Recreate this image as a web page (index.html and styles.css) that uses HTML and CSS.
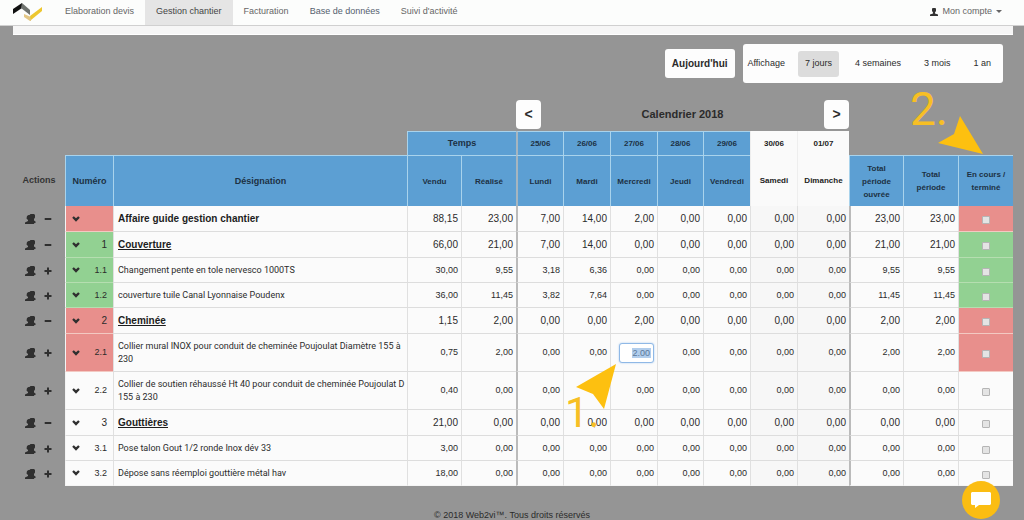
FILE: index.html
```html
<!DOCTYPE html>
<html lang="fr">
<head>
<meta charset="utf-8">
<title>Gestion chantier</title>
<link rel="stylesheet" href="styles.css">
</head>
<body>
<svg class="defs" aria-hidden="true">
  <symbol id="users" viewBox="0 0 11 10"><path d="M5.500 0H9l1 1v2.500L9 5v1.500l1.500 1V9L9 9.300V10H0V8.500L3 7V6L1.500 4.500 2 2l1.500-1h1z"/></symbol>
  <symbol id="minus" viewBox="0 0 8 8"><path d="M.7 3h6.600v2H.7z"/></symbol>
  <symbol id="plus" viewBox="0 0 8 8"><path d="M3 0.500h2V3h2.500v2H5v2.500H3V5H.5V3H3z"/></symbol>
  <symbol id="chev" viewBox="0 0 8 6"><path d="M.2 1.800 1.800.3 4 2.200 6.200.3 7.800 1.800 4 5.800z"/></symbol>
</svg>
<nav class="navbar">
  <a class="brand" href="#" aria-label="Accueil">
    <svg viewBox="0 0 30 18" width="30" height="18"><path d="M0 6 9 0v5L0 11z" fill="#111"/><path d="M9 0l8 7v5L8 5z" fill="#6f736f"/><path d="M11 11l7 3v4h-1l-6-4z" fill="#e3c684"/><path d="M17 13 29 4v4L18 17z" fill="#edc72f"/></svg>
  </a>
  <a class="tab" href="#">Elaboration devis</a>
  <a class="tab active" href="#">Gestion chantier</a>
  <a class="tab" href="#">Facturation</a>
  <a class="tab blue" href="#">Base de données</a>
  <a class="tab" href="#">Suivi d'activité</a>
  <a class="account" href="#"><svg viewBox="0 0 8 8" width="8" height="8"><path d="M2.500 0h3l.5 1v2l-1 1.500v1L8 6.500V8H0V6.500l3-1v-1L2 3V1z" fill="#333"/></svg>Mon compte<span class="caret"></span></a>
</nav>
<main class="content">
  <div class="panel-end"></div>
  <div class="toolbar">
    <button class="today">Aujourd'hui</button>
    <div class="views"><span class="views-label">Affichage</span><button class="view on">7 jours</button><button class="view">4 semaines</button><button class="view">3 mois</button><button class="view">1 an</button></div>
  </div>
  <table class="plan">
    <colgroup><col class="c-act"><col class="c-num"><col><col class="c-time"><col class="c-tot"><col class="c-day"><col class="c-day"><col class="c-day"><col class="c-dayn"><col class="c-day"><col class="c-day"><col class="c-sun"><col class="c-time"><col class="c-tot"><col class="c-tot"></colgroup>
    <thead>
      <tr class="cal"><td colspan="5"></td><td colspan="7"><div class="calbar"><button class="step" aria-label="Semaine précédente">&lt;</button><span>Calendrier 2018</span><button class="step" aria-label="Semaine suivante">&gt;</button></div></td><td colspan="3"></td></tr>
      <tr class="dates"><td colspan="3"></td><th class="h mid" colspan="2">Temps</th><th class="h mark">25/06</th><th class="h">26/06</th><th class="h">27/06</th><th class="h">28/06</th><th class="h">29/06</th><th class="w">30/06</th><th class="w">01/07</th><td colspan="3"></td></tr>
      <tr class="names"><th class="act mid">Actions</th><th class="h mid">Numéro</th><th class="h mid">Désignation</th><th class="h">Vendu</th><th class="h">Réalisé</th><th class="h mark">Lundi</th><th class="h">Mardi</th><th class="h">Mercredi</th><th class="h">Jeudi</th><th class="h">Vendredi</th><th class="w">Samedi</th><th class="w">Dimanche</th><th class="h">Total période ouvrée</th><th class="h">Total période</th><th class="h anchor">En cours / terminé
        <span class="step-label two">2.</span>
        <svg class="arrow arrow-two" viewBox="0 0 45 38" width="45" height="38"><path d="M22 0 45 38 0 27l16-9z" fill="#fdc010"/></svg></th></tr>
    </thead>
    <tbody>
      <tr class="main red"><td class="act"><div><button aria-label="Équipe"><svg class="i-users"><use href="#users"/></svg></button><button aria-label="Réduire"><svg class="i-sign"><use href="#minus"/></svg></button></div></td><td class="num"><div><svg class="i-chev"><use href="#chev"/></svg><span></span></div></td><td class="des">Affaire guide gestion chantier</td><td>88,15</td><td>23,00</td><td class="mark">7,00</td><td>14,00</td><td>2,00</td><td>0,00</td><td>0,00</td><td class="we">0,00</td><td class="we">0,00</td><td class="mark">23,00</td><td>23,00</td><td class="chk"><input type="checkbox" aria-label="Affaire terminée"></td></tr>
      <tr class="main green"><td class="act"><div><button aria-label="Équipe"><svg class="i-users"><use href="#users"/></svg></button><button aria-label="Réduire"><svg class="i-sign"><use href="#minus"/></svg></button></div></td><td class="num"><div><svg class="i-chev"><use href="#chev"/></svg><span>1</span></div></td><td class="des"><a href="#">Couverture</a></td><td>66,00</td><td>21,00</td><td class="mark">7,00</td><td>14,00</td><td>0,00</td><td>0,00</td><td>0,00</td><td class="we">0,00</td><td class="we">0,00</td><td class="mark">21,00</td><td>21,00</td><td class="chk"><input type="checkbox" aria-label="1 terminé"></td></tr>
      <tr class="green"><td class="act"><div><button aria-label="Équipe"><svg class="i-users"><use href="#users"/></svg></button><button aria-label="Ajouter"><svg class="i-sign"><use href="#plus"/></svg></button></div></td><td class="num"><div><svg class="i-chev"><use href="#chev"/></svg><span>1.1</span></div></td><td class="des">Changement pente en tole nervesco 1000TS</td><td>30,00</td><td>9,55</td><td class="mark">3,18</td><td>6,36</td><td>0,00</td><td>0,00</td><td>0,00</td><td class="we">0,00</td><td class="we">0,00</td><td class="mark">9,55</td><td>9,55</td><td class="chk"><input type="checkbox" aria-label="1.1 terminé"></td></tr>
      <tr class="green"><td class="act"><div><button aria-label="Équipe"><svg class="i-users"><use href="#users"/></svg></button><button aria-label="Ajouter"><svg class="i-sign"><use href="#plus"/></svg></button></div></td><td class="num"><div><svg class="i-chev"><use href="#chev"/></svg><span>1.2</span></div></td><td class="des">couverture tuile Canal Lyonnaise Poudenx</td><td>36,00</td><td>11,45</td><td class="mark">3,82</td><td>7,64</td><td>0,00</td><td>0,00</td><td>0,00</td><td class="we">0,00</td><td class="we">0,00</td><td class="mark">11,45</td><td>11,45</td><td class="chk"><input type="checkbox" aria-label="1.2 terminé"></td></tr>
      <tr class="main red"><td class="act"><div><button aria-label="Équipe"><svg class="i-users"><use href="#users"/></svg></button><button aria-label="Réduire"><svg class="i-sign"><use href="#minus"/></svg></button></div></td><td class="num"><div><svg class="i-chev"><use href="#chev"/></svg><span>2</span></div></td><td class="des"><a href="#">Cheminée</a></td><td>1,15</td><td>2,00</td><td class="mark">0,00</td><td>0,00</td><td>2,00</td><td>0,00</td><td>0,00</td><td class="we">0,00</td><td class="we">0,00</td><td class="mark">2,00</td><td>2,00</td><td class="chk"><input type="checkbox" aria-label="2 terminé"></td></tr>
      <tr class="tall red"><td class="act"><div><button aria-label="Équipe"><svg class="i-users"><use href="#users"/></svg></button><button aria-label="Ajouter"><svg class="i-sign"><use href="#plus"/></svg></button></div></td><td class="num"><div><svg class="i-chev"><use href="#chev"/></svg><span>2.1</span></div></td><td class="des">Collier mural INOX pour conduit de cheminée Poujoulat Diamètre 155 à 230</td><td>0,75</td><td>2,00</td><td class="mark">0,00</td><td>0,00</td><td class="edit anchor"><input type="text" class="hours" value="2.00" aria-label="Heures du mercredi"><svg class="arrow arrow-one" viewBox="0 0 40 45" width="40" height="45"><path d="M40 0 28 45 17 30 0 23z" fill="#fdc010"/></svg><span class="step-label one">1.</span></td><td>0,00</td><td>0,00</td><td class="we">0,00</td><td class="we">0,00</td><td class="mark">2,00</td><td>2,00</td><td class="chk"><input type="checkbox" aria-label="2.1 terminé"></td></tr>
      <tr class="tall"><td class="act"><div><button aria-label="Équipe"><svg class="i-users"><use href="#users"/></svg></button><button aria-label="Ajouter"><svg class="i-sign"><use href="#plus"/></svg></button></div></td><td class="num"><div><svg class="i-chev"><use href="#chev"/></svg><span>2.2</span></div></td><td class="des">Collier de soutien réhaussé Ht 40 pour conduit de cheminée Poujoulat D 155 à 230</td><td>0,40</td><td>0,00</td><td class="mark">0,00</td><td>0,00</td><td>0,00</td><td>0,00</td><td>0,00</td><td class="we">0,00</td><td class="we">0,00</td><td class="mark">0,00</td><td>0,00</td><td class="chk"><input type="checkbox" aria-label="2.2 terminé"></td></tr>
      <tr class="main"><td class="act"><div><button aria-label="Équipe"><svg class="i-users"><use href="#users"/></svg></button><button aria-label="Réduire"><svg class="i-sign"><use href="#minus"/></svg></button></div></td><td class="num"><div><svg class="i-chev"><use href="#chev"/></svg><span>3</span></div></td><td class="des"><a href="#">Gouttières</a></td><td>21,00</td><td>0,00</td><td class="mark">0,00</td><td>0,00</td><td>0,00</td><td>0,00</td><td>0,00</td><td class="we">0,00</td><td class="we">0,00</td><td class="mark">0,00</td><td>0,00</td><td class="chk"><input type="checkbox" aria-label="3 terminé"></td></tr>
      <tr><td class="act"><div><button aria-label="Équipe"><svg class="i-users"><use href="#users"/></svg></button><button aria-label="Ajouter"><svg class="i-sign"><use href="#plus"/></svg></button></div></td><td class="num"><div><svg class="i-chev"><use href="#chev"/></svg><span>3.1</span></div></td><td class="des">Pose talon Gout 1/2 ronde Inox dév 33</td><td>3,00</td><td>0,00</td><td class="mark">0,00</td><td>0,00</td><td>0,00</td><td>0,00</td><td>0,00</td><td class="we">0,00</td><td class="we">0,00</td><td class="mark">0,00</td><td>0,00</td><td class="chk"><input type="checkbox" aria-label="3.1 terminé"></td></tr>
      <tr><td class="act"><div><button aria-label="Équipe"><svg class="i-users"><use href="#users"/></svg></button><button aria-label="Ajouter"><svg class="i-sign"><use href="#plus"/></svg></button></div></td><td class="num"><div><svg class="i-chev"><use href="#chev"/></svg><span>3.2</span></div></td><td class="des">Dépose sans réemploi gouttière métal hav</td><td>18,00</td><td>0,00</td><td class="mark">0,00</td><td>0,00</td><td>0,00</td><td>0,00</td><td>0,00</td><td class="we">0,00</td><td class="we">0,00</td><td class="mark">0,00</td><td>0,00</td><td class="chk"><input type="checkbox" aria-label="3.2 terminé"></td></tr>
    </tbody>
  </table>
</main>
<footer class="footer">© 2018 Web2vi™. Tous droits réservés</footer>
<button class="chat" aria-label="Ouvrir la discussion"><svg viewBox="0 0 20 16" width="20" height="16"><path d="M1 0h18l1 1v11l-1 1H8l-4 3v-3H1l-1-1V1z" fill="#fff"/></svg></button>
</body>
</html>
```
FILE: styles.css
```css
* { box-sizing: border-box; }
body { margin: 0; height: 100vh; overflow: hidden; background: #959595; color: #2b2b2b; font: 9px/13px "Liberation Sans", Arial, sans-serif; }
button, input { font: inherit; color: inherit; margin: 0; }
button { border: 0; padding: 0; background: none; }
a { color: inherit; }
.defs { position: absolute; width: 0; height: 0; }

.navbar { display: flex; height: 26px; padding: 0 22px 0 13px; background: #fcfdfc; border-bottom: 1px solid #d0d0d0; }
.navbar a { display: flex; align-items: center; text-decoration: none; color: #666; padding-bottom: 2px; }
.navbar .brand { width: 42px; }
.navbar .tab { padding: 0 10px 2px; margin-right: 1px; }
.navbar .tab.active { padding: 0 11px 2px; background: #e5e5e5; color: #444; }
.navbar .tab.blue { color: #55606e; }
.navbar .account { margin-left: auto; gap: 4px; }
.caret { border: 3px solid transparent; border-top-color: #666; border-bottom: 0; }

.content { margin: 0 11px 0 13px; }
.panel-end { height: 9px; background: #f6f6f6; border-bottom: 1px solid #fff; }
.toolbar { display: flex; justify-content: flex-end; align-items: center; gap: 8px; padding: 9px 10px 0 0; }
.today { height: 29px; padding: 0 7px; border-radius: 3px; background: #fdfdfd; font-size: 10px; font-weight: bold; }
.views { display: flex; align-items: center; gap: 9px; height: 39px; padding: 0 5px; border-radius: 3px; background: #fdfdfd; }
.views-label { margin-right: 4px; }
.view { height: 26px; padding: 0 7px; border-radius: 3px; }
.view.on { background: #dcdcdc; }

.plan { width: 100%; margin-top: 15px; table-layout: fixed; border-collapse: separate; border-spacing: 0; }
.c-act { width: 52px; }
.c-num { width: 48px; }
.c-time { width: 54px; }
.c-tot { width: 55px; }
.c-day { width: 47px; }
.c-dayn { width: 46px; }
.c-sun { width: 52px; }
.plan th, .plan td { padding: 0; }
.cal { height: 33px; font-size: 11px; font-weight: bold; }
.calbar { display: flex; justify-content: space-between; align-items: center; }
.step { width: 25px; height: 29px; border-radius: 4px; background: #fdfdfd; font-size: 14px; font-weight: bold; }
.dates { height: 24px; }
.names { height: 51px; }
.plan th { font-size: 8px; color: #1d3144; }
.plan .mid { font-size: 9px; }
.plan .h { background: #5c9fd3; border-left: 1px solid #a9d3ec; border-top: 1px solid #a9d3ec; }
.plan .w { background: #fafafa; border-left: 1px solid #eee; color: #222; }
.plan th.act { color: #333; }
.plan th.mark { border-left: 2px solid #a6b6c0; }
.names .h:nth-last-child(-n+3) { padding: 0 6px; }

tbody tr { height: 25px; }
tbody tr.main { height: 26px; }
tbody tr.tall { height: 38px; }
tbody td { background: #fbfbfb; border-left: 1px solid #e0e0e0; border-bottom: 1px solid #ddd; text-align: right; }
.plan tbody td { padding: 0 3px 0 0; }
tbody tr:last-child td { border-bottom-color: #f5f5f5; }
.main td { font-size: 10px; }
tbody td.we { background: #f7f7f7; }
tbody td.mark { border-left: 2px solid #bbb; }
.plan tbody td.act { padding: 0 0 0 12px; background: none; border: 0; }
.act div { display: flex; align-items: center; gap: 8px; }
.act button { display: flex; }
svg { fill: #2f2f2f; }
.i-users { width: 11px; height: 10px; }
.i-sign { width: 8px; height: 8px; }
.i-chev { width: 8px; height: 6px; }
.plan tbody td.num { padding: 0 6px; border-left-color: #f4f4f4; }
.num div { display: flex; align-items: center; justify-content: space-between; }
.plan tbody td.des { padding: 0 0 0 4px; text-align: left; font-family: Roboto, sans-serif; }
.plan tbody .main .des { font-family: inherit; font-weight: bold; color: #1d1d1d; }
.red .num, .red .chk { background: #e88f8c; border-bottom-color: #f3c9c2; }
.green .num, .green .chk { background: #92d192; border-bottom-color: #b5deb0; }
.plan tbody td.chk { padding: 3px 1px 0 0; text-align: center; line-height: 7px; }
.chk input { appearance: none; width: 8px; height: 8px; border: 1px solid #b5b5b5; border-radius: 1px; background: #e4e4e4; vertical-align: middle; }

.anchor { position: relative; }
.hours { display: block; width: 35px; height: 20px; margin: 0 0 0 auto; padding: 0 3px; text-align: right; color: #5b7899; border: 1px solid #8fb8e6; border-radius: 3px; box-shadow: 0 0 2px #a5c8ee; background: linear-gradient(#b1cdec, #b1cdec) right 2px center / 19px 10px no-repeat #fff; }
.arrow { position: absolute; z-index: 2; }
.arrow-two { left: -21px; top: -40px; }
.arrow-one { left: -35px; top: 30px; }
.step-label { position: absolute; z-index: 2; font: 46px/46px Roboto, sans-serif; color: #f7bf24; }
.two { left: -49px; top: -70px; }
.one { left: -46px; top: 56px; font-size: 42px; }

.footer { padding-top: 23px; text-align: center; }
.chat { position: fixed; right: 24px; bottom: 1px; width: 38px; height: 38px; border-radius: 50%; background: #fbbd12; display: flex; align-items: center; justify-content: center; }
```
